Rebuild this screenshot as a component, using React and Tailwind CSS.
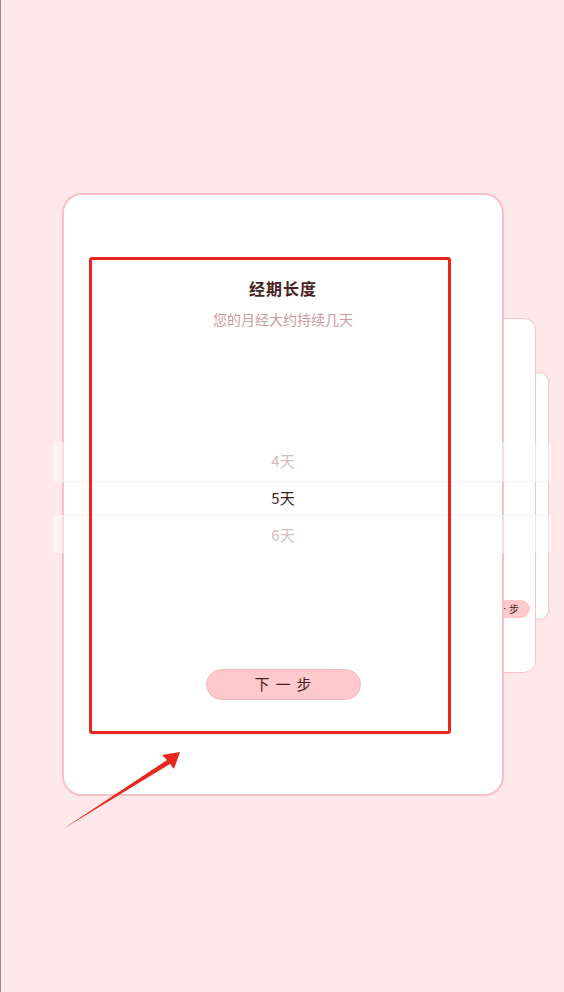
import React from "react";

// Picker rows shown around the selected value
const rows = [
  { label: "4天", active: false },
  { label: "5天", active: true },
  { label: "6天", active: false },
];

const BackCards = () => (
  <>
    {/* third card, furthest back */}
    <div className="absolute left-[420px] top-[372px] w-[128px] h-[248px] rounded-[10px] border-[1.5px] border-[#f7c3c7] bg-white" />
    {/* second card */}
    <div className="absolute left-[400px] top-[318px] w-[135px] h-[355px] rounded-[12px] border-[1.5px] border-[#f7c3c7] bg-white" />
    <div className="absolute left-[470px] top-[600px] w-[59px] h-[18px] rounded-full bg-[#fdc9cc] flex items-center justify-end pr-[8px] text-[10px] leading-none text-[#4a1f1f] tracking-[3px]">
      下一步
    </div>
  </>
);

const Arrow = () => (
  <svg className="absolute left-0 top-0 pointer-events-none" width="564" height="992" viewBox="0 0 564 992">
    <polygon points="62,829 166,760 161,755 179,752 173,769 169,764" fill="#e8281d" />
  </svg>
);

export default function App() {
  return (
    <div
      className="relative w-[564px] h-[992px] overflow-hidden bg-[#fee8ea] border-l border-[#a08688]"
      style={{ fontFamily: '"Noto Sans CJK SC", "Noto Sans", sans-serif' }}
    >
      <BackCards />

      {/* main card */}
      <div className="absolute left-[61px] top-[193px] w-[442px] h-[603px] rounded-[20px] border-2 border-[#f7c0c4] bg-white flex flex-col items-center pt-[81px]">
        <h2 className="text-[16px] leading-[24px] font-bold text-[#4a1f22] tracking-[1px]">经期长度</h2>
        <p className="mt-[9px] text-[14px] leading-[20px] text-[#c89aa1]">您的月经大约持续几天</p>

        <div className="mt-[114px] flex flex-col items-center">
          {rows.map((r) => (
            <div
              key={r.label}
              className={`h-[37px] flex items-center text-[15px] ${r.active ? "text-[#3d1f22]" : "text-[#b5868d]"}`}
            >
              {r.label}
            </div>
          ))}
        </div>

        <button className="mt-[115px] w-[155px] h-[31px] rounded-full bg-[#fdc9cc] border border-[#f7b8bd] text-[15px] text-[#4a1f22] tracking-[6px] pl-[6px]">
          下一步
        </button>
      </div>

      {/* picker mask bands overflowing the card */}
      <div className="absolute left-[52px] top-[442px] w-[498px] h-[40px] bg-white/45 border-b border-[#f5efef]" />
      <div className="absolute left-[52px] top-[515px] w-[498px] h-[38px] bg-white/45 border-t border-[#f5efef]" />

      {/* annotation box */}
      <div className="absolute left-[88px] top-[257px] w-[362px] h-[477px] rounded-[3px] border-[3px] border-[#e8261d] pointer-events-none" />
      <Arrow />
    </div>
  );
}
